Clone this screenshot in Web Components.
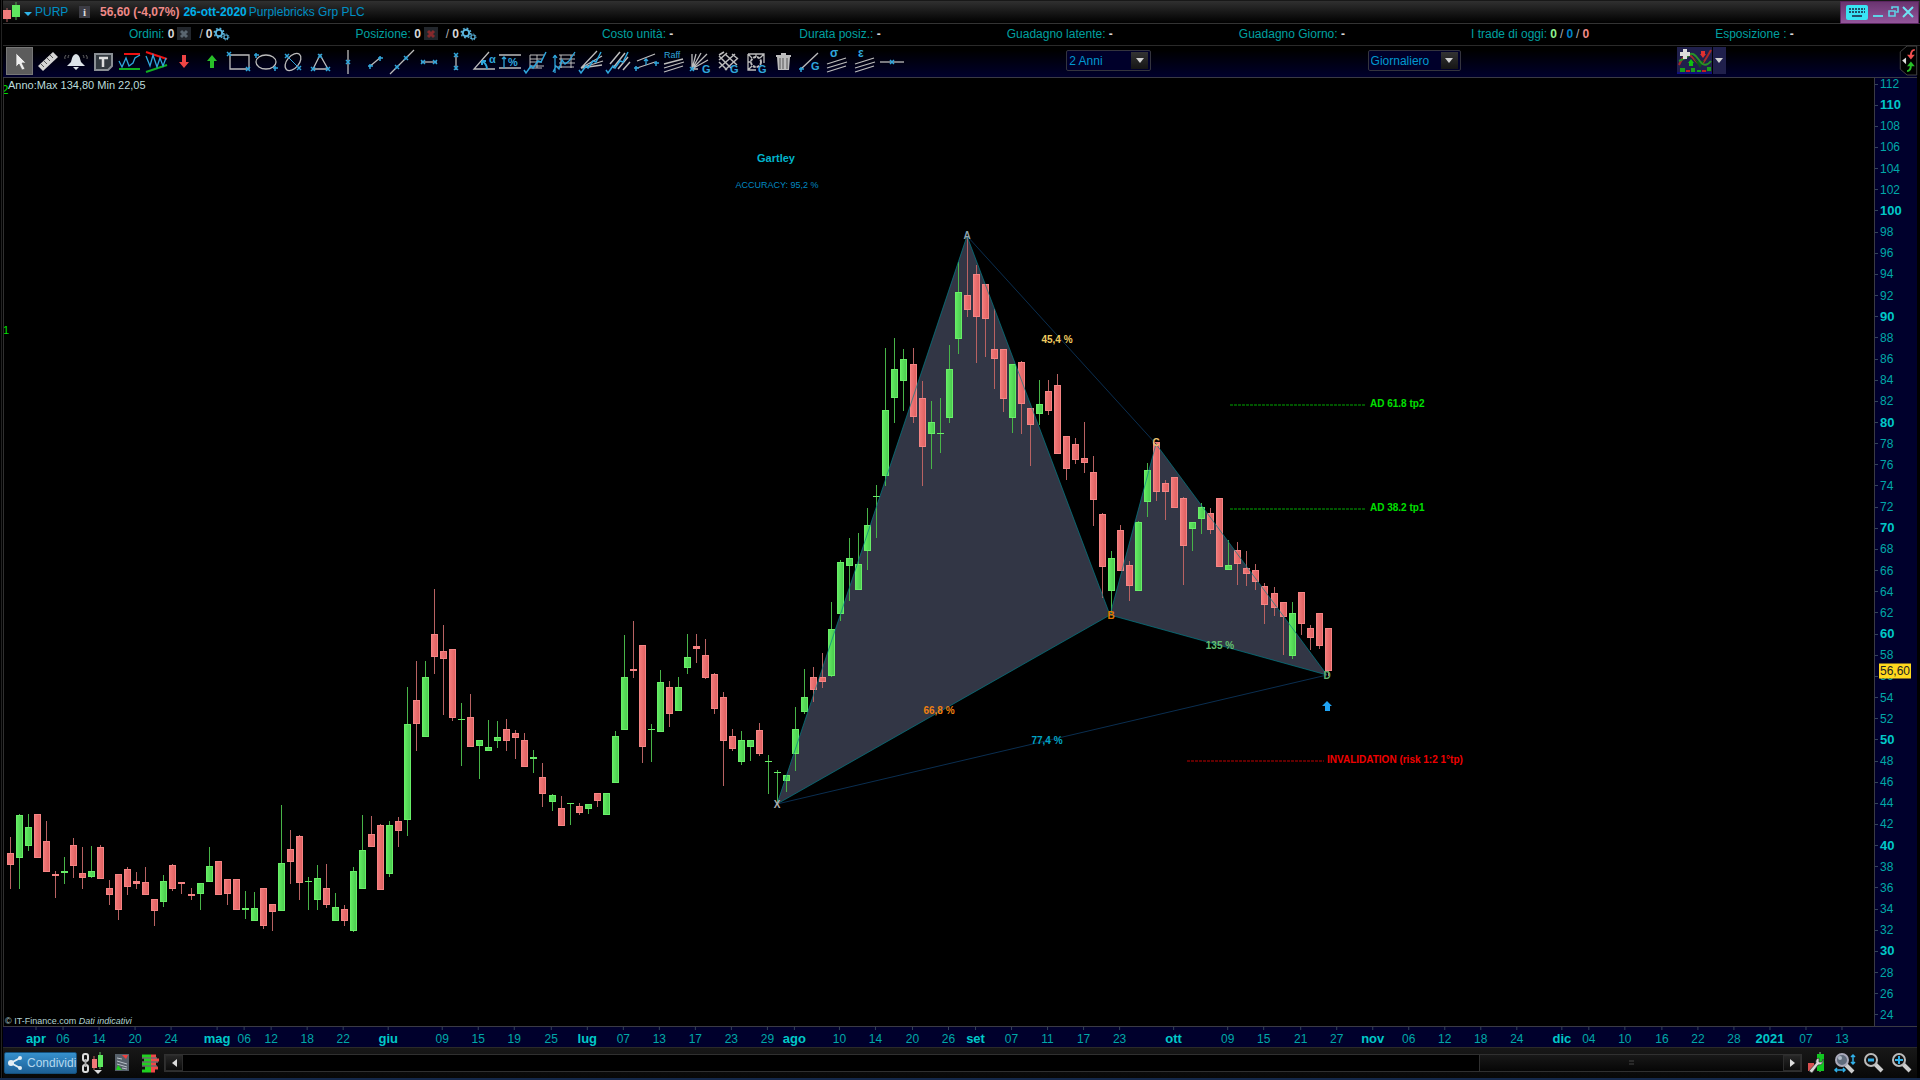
<!DOCTYPE html>
<html lang="it">
<head>
<meta charset="utf-8">
<title>PURP - Purplebricks Grp PLC</title>
<style>
  html, body { height: 100%; margin: 0; background: #000; }
  body { font: 12px/14px "Liberation Sans", Arial, sans-serif; color: #00a0a0; overflow: hidden; }
</style>
</head>
<body>
<pt-window>
  <pt-titlebar symbol="PURP" price="56,60 (-4,07%)" date="26-ott-2020">Purplebricks Grp PLC</pt-titlebar>
  <pt-account></pt-account>
  <pt-toolbar></pt-toolbar>
  <pt-chart></pt-chart>
  <pt-timeaxis></pt-timeaxis>
  <pt-bottombar></pt-bottombar>
</pt-window>

<script>
// Shared base: render() returns the shadow markup
class PtElement extends HTMLElement {
  connectedCallback() {
    if (this.shadowRoot) return;
    this.attachShadow({ mode: "open" });
    this.shadowRoot.innerHTML = this.render();
  }
}

const RESET = `
  * { box-sizing: border-box; }
  button { all: unset; box-sizing: border-box; display: grid; place-items: center; cursor: default; }
  svg { display: block; overflow: visible; }
`;

class PtWindow extends PtElement {
  render() {
    return `
      <style>
        :host {
          display: grid;
          box-sizing: border-box;
          grid-template-rows: 24px 22px 32px minmax(0, 1fr) 20px 31px;
          height: 100vh;
          padding-left: 3px;
          background: linear-gradient(90deg, #000 1px, #222 1px, #222 2px, #000 2px);
          border-bottom: 2px solid #14284a;
        }
      </style>
      <slot></slot>
    `;
  }
}
customElements.define("pt-window", PtWindow);

class PtTitlebar extends PtElement {
  render() {
    return `
      <style>
        ${RESET}
        :host {
          display: flex;
          align-items: center;
          box-sizing: border-box;
          background: linear-gradient(#303030, #000);
          border-top: 1px solid #181818;
          border-bottom: 1px solid #333;
          color: #008fc4;
        }
        .symbol { display: flex; align-items: center; gap: 8px; width: 76px; color: #008fc4; }
        .info { width: 11px; height: 12px; margin-right: 10px; background: #3c3c44; color: #ddd; font: bold 11px/12px "Liberation Serif", serif; }
        .price { color: #f08a88; font-weight: bold; margin-right: 4px; }
        .date { color: #00b0ea; font-weight: bold; margin-right: 2px; }
        .win {
          display: flex; align-items: center; gap: 5px; height: 23px; margin-left: auto; padding: 0 5px; margin-right: 1px;
          background: linear-gradient(#6a3470, #93569a); border: 1px solid #5a2560;
        }
      </style>
      <button class="symbol">
        <svg width="24" height="20" viewBox="0 0 24 20" aria-hidden="true">
          <path d="M4 6v14" stroke="#b06060"/><rect x="0" y="8" width="8" height="9" fill="#f07c7c"/>
          <path d="M13 0v18" stroke="#50b050"/><rect x="9" y="3" width="8" height="12" fill="#5fe85f"/>
          <path d="M21 10h8l-4 4z" fill="#2fb4e8"/>
        </svg>
        ${this.getAttribute("symbol")}
      </button>
      <button class="info" aria-label="Info">i</button>
      <span class="price">${this.getAttribute("price")}</span>
      <span class="date">${this.getAttribute("date")}</span>
      <slot></slot>
      <div class="win">
        <button aria-label="Tastiera"><svg width="22" height="16" viewBox="0 0 22 16">
          <rect y="1" width="22" height="15" rx="2" fill="#38e4f4"/>
          <path d="M3 5h16M3 8h16" stroke="#20506a" stroke-width="2" stroke-dasharray="2 1"/>
          <path d="M6 12h10" stroke="#20506a" stroke-width="2"/></svg></button>
        <button aria-label="Riduci"><svg width="10" height="14"><path d="M0 11h10" stroke="#5fd4e8" stroke-width="2"/></svg></button>
        <button aria-label="Ripristina"><svg width="10" height="12" fill="none" stroke="#5fd4e8"><path d="M4 3V1h6v5H8M1 5h6v5H1z" stroke-width="1.6"/></svg></button>
        <button aria-label="Chiudi"><svg width="10" height="10"><path d="M0 0l10 10M10 0L0 10" stroke="#6fe4f4" stroke-width="2"/></svg></button>
      </div>
    `;
  }
}
customElements.define("pt-titlebar", PtTitlebar);

const GEARS = `
  <svg width="16" height="14" viewBox="0 0 16 14" fill="none" stroke="#5ab4dc">
    <circle cx="6" cy="6" r="3.2" stroke-width="2"/>
    <circle cx="6" cy="6" r="4.8" stroke-width="1.4" stroke-dasharray="1.8 1.97"/>
    <circle cx="13" cy="10" r="2" stroke-width="1.2"/>
    <circle cx="13" cy="10" r="3" stroke-width="1" stroke-dasharray="1.2 1.15"/>
  </svg>`;

class PtAccount extends PtElement {
  orders(label, color) {
    return `
      <div>${label}:&nbsp;<b>0</b>
        <button class="cancel" aria-label="Annulla ${label}"><svg width="8" height="8"><path d="M1 1l6 6M7 1L1 7" stroke="${color}" stroke-width="3"/></svg></button>
        <i>/</i><b>0</b><button class="gears" aria-label="Opzioni ${label}">${GEARS}</button>
      </div>`;
  }
  render() {
    const plain = label => `<div>${label}&nbsp;<b>-</b></div>`;
    return `
      <style>
        ${RESET}
        :host {
          display: flex; align-items: center; justify-content: space-evenly; box-sizing: border-box;
          padding-bottom: 2px; border-bottom: 1px solid #2a2a2a; background: #000;
        }
        div { display: flex; align-items: center; }
        b { color: #d8d8d8; }
        i { color: #b0b0b0; font-style: normal; margin: 0 3px; }
        .cancel { width: 14px; height: 13px; margin: 0 5px 0 3px; background: #22262c; }
        .gears { margin-left: 1px; }
      </style>
      ${this.orders("Ordini", "#5a6670")}
      ${this.orders("Posizione", "#84292c")}
      ${plain("Costo unità:")}
      ${plain("Durata posiz.:")}
      ${plain("Guadagno latente:")}
      ${plain("Guadagno Giorno:")}
      <div>I trade di oggi:&nbsp;<b style="color:#8ff08f">0</b><i>/</i><b style="color:#0082c8">0</b><i>/</i><b style="color:#f08a88">0</b></div>
      ${plain("Esposizione :")}
    `;
  }
}
customElements.define("pt-account", PtAccount);

// Toolbar icons, all on a 28 x 28 grid
const W = "#bcbcbc";
const B = "#2fa6dc";
const cross = (x, y) => `<path d="M${x - 2} ${y - 2}l4 4m0-4l-4 4" stroke="${B}" stroke-width="1.5"/>`;
const plus = (x, y) => `<path d="M${x - 2} ${y}h5M${x} ${y - 2}v5" stroke="${B}" stroke-width="1.5"/>`;
const line = (d, color = W, w = 1.3) => `<path d="${d}" stroke="${color}" stroke-width="${w}" fill="none"/>`;
const glyph = (x, y, t, size = 11, weight = "bold") =>
  `<text x="${x}" y="${y}" fill="${B}" font-size="${size}" font-weight="${weight}">${t}</text>`;
const TREND = line("M0 22l2 3 5-7 2 2 5-7 3 1 5-10", B, 1.5);

const TOOLS = [
  ["Cursore", `<path d="M9 5v14l3-3 3 6 3-1-3-6h4z" fill="#eee" stroke="#555" stroke-width=".7"/>`],
  ["Misura", `<path d="M4 18L19 4l5 5L9 23z" fill="#d4d4d4"/>${line("M7 16l3 3M10 13l3 3M13 10l3 3M16 7l3 3", "#555", 1)}`],
  ["Allarme", `<path d="M14 6c-4 1-4 5-5 8l-4 4h18l-4-4c-1-3-1-7-5-8zM11 19h6l-3 3z" fill="#dde4e8"/>${line("M4 7q-2 2-1 4M7 7q-1 1-1 3M24 7q2 2 1 4M21 7q1 1 1 3", "#666", 1)}`],
  ["Testo", `<path d="M6 6h17v12l-4 4H6z" fill="#333a40" stroke="#8a8f94" stroke-width="2"/>${line("M10 10h9M14 10v9", "#ddd", 2.5)}`],
  ["Supporti", `${line("M8 6h16", "#f01010", 2)}${line("M3 21h21", "#10b020", 2)}${line("M3 13l3 6 4-9 3 8 4-3 2-5 5-3", B, 1.3)}`],
  ["Triangoli", `${line("M3 4l21 7", "#f01010", 2)}${line("M3 24l21-7", "#10b020", 2)}${line("M3 8l4 10 3-11 4 12 3-9 3 8 3-8", B, 1.3)}`],
  ["Freccia giù", `<path d="M12 7h4v7h3l-5 6-5-6h3z" fill="#ee4444"/>`],
  ["Freccia su", `<path d="M12 20h4v-7h3l-5-6-5 6h3z" fill="#28c028"/>`],
  ["Rettangolo", `${line("M5 7h19v14H5z")}${cross(4, 6)}${cross(23, 21)}`],
  ["Ellisse", `<ellipse cx="14" cy="14" rx="10" ry="7" fill="none" stroke="${W}" stroke-width="1.3"/>${plus(4, 7)}${plus(23, 20)}`],
  ["Ellisse obliqua", `<ellipse cx="14" cy="14" rx="10" ry="6" transform="rotate(-50 14 14)" fill="none" stroke="${W}" stroke-width="1.3"/>${line("M8 8l12 12", B, 1)}${cross(8, 8)}${cross(20, 20)}`],
  ["Triangolo", `${line("M14 7L7 21h15z")}${cross(14, 8)}${cross(7, 21)}${cross(22, 21)}`],
  ["Verticale", `${line("M14 2v24")}${cross(14, 14)}`],
  ["Segmento", `${line("M8 19L20 9")}${plus(9, 18)}${plus(19, 10)}`],
  ["Retta", `${line("M2 26L26 2")}${cross(9, 19)}${cross(18, 10)}`],
  ["Segmento orizzontale", `${line("M6 14h16")}${cross(8, 14)}${cross(20, 14)}`],
  ["Segmento verticale", `${line("M14 6v16")}${cross(14, 7)}${cross(14, 20)}`],
  ["Angolo", `${line("M19 4L4 21h21")}${line("M12 13q5 3 5 8M12 13l4 0M12 13v4", B, 2)}${glyph(19, 15, "α", 11)}`],
  ["Percentuale", `${line("M2 7h22M2 20h22")}${line("M7 20V9M5 11l2-2 2 2", B)}${glyph(11, 18, "%", 11)}`],
  ["Fibonacci", `${line("M6 7h14M6 11h12M6 14h12M6 18h14M6 20h12M6 7v13M13 7v13", W, 1)}${TREND}`],
  ["Estensioni", `${line("M8 7h16M8 11h16M8 15h16M6 19h17M10 7v13M20 7v13", W, 1)}${line("M2 24l3-6 3 3 3-9 3 4 4-3 6-9M4 7v18M4 7l-2 3M4 7l2 3", B)}`],
  ["Ventaglio", `${line("M2 20L18 3M2 20L23 8M2 20L24 13M2 20L23 17")}${TREND}`],
  ["Forchetta", `${line("M4 16L14 4M7 20L19 5M12 21L22 9M17 22l7-8", W, 1.5)}${TREND}`],
  ["Canale", `${line("M4 13L22 6M4 20L22 14")}${plus(3, 20)}${plus(23, 15)}${line("M13 17V11M11 13l2-2 2 2", B)}`],
  ["Canale Raff", `${line("M4 16l19-5M4 20l20-6M4 24l19-6")}${glyph(4, 10, "Raff", 9, "normal")}`],
  ["Gann ventaglio", `${line("M5 21V6M5 21L9 6M5 21L14 5M5 21L20 6M5 21L21 12M5 21h6")}${cross(5, 21)}${glyph(15, 25, "G")}`],
  ["Gann griglia", `${line("M4 8l12 12M4 14l8 8M10 6l12 11M17 6l6 5M4 20L20 6M4 12l8-7M10 22L23 10M4 7l5-3", W, 1.5)}${glyph(15, 25, "G")}`],
  ["Gann quadrato", `${line("M6 6h16v9M14 22H6V6M6 6l4 4M22 6l-4 4M6 22l4-4M14 6v3M6 14h3")}<circle cx="14" cy="14" r="5" fill="none" stroke="${W}" stroke-width="2" stroke-dasharray="3 1"/>${glyph(16, 25, "G")}`],
  ["Elimina", `<path d="M8 9h13l-1 13H9zM7 7h15v2H7zM12 5h5v2h-5z" fill="#bdbdbd"/>${line("M11 10v11M14 10v11M18 10v11", "#555", 1)}`],
  ["Gann linea", `${line("M5 21L22 5")}${plus(5, 21)}${glyph(15, 22, "G")}`],
  ["Deviazione", `${line("M4 16l19-6M4 20l20-6M4 24l19-6")}${glyph(7, 9, "σ", 12)}`],
  ["Errore standard", `${line("M4 16l19-6M4 20l20-6M4 24l19-6")}${glyph(7, 9, "ε", 12)}`],
  ["Orizzontale", `${line("M2 14h24")}${cross(14, 14)}`],
];

class PtTool extends PtElement {
  render() {
    return `
      <style>
        ${RESET}
        :host { display: grid; justify-content: center; }
        button { width: 27px; height: 28px; border: 1px solid transparent; }
        :host([active]) button { background: #5c5c5c; border-color: #777; }
      </style>
      <button aria-label="${this.getAttribute("label")}"><slot></slot></button>
    `;
  }
}
customElements.define("pt-tool", PtTool);

class PtSelect extends PtElement {
  render() {
    return `
      <style>
        :host { display: grid; grid-template-columns: minmax(0, 1fr) 17px; align-items: center; box-sizing: border-box;
          height: 21px; padding-right: 2px; border: 1px solid #34343e; border-radius: 2px; background: #00002a; }
        select { appearance: none; grid-area: 1 / 1 / 2 / 3; border: 0; margin: 0; padding: 0 2px; height: 19px; background: none; color: #0098d0; font: inherit; }
        span { grid-area: 1 / 2; display: grid; place-items: center; height: 17px; background: linear-gradient(#333, #151515); pointer-events: none; }
      </style>
      <select aria-label="${this.getAttribute("label")}"><option>${this.getAttribute("value")}</option></select>
      <span><svg width="8" height="5"><path d="M0 0h8L4 5z" fill="#d0d0d0"/></svg></span>
    `;
  }
}
customElements.define("pt-select", PtSelect);

class PtToolbar extends PtElement {
  render() {
    const tools = TOOLS.map(([label, art], i) =>
      `<pt-tool label="${label}"${i ? "" : " active"}><svg width="28" height="28" viewBox="0 0 28 28">${art}</svg></pt-tool>`).join("");
    return `
      <style>
        ${RESET}
        :host {
          display: flex; align-items: center; box-sizing: border-box; margin-right: 3px; padding: 0 0 2px 3px;
          background: linear-gradient(#000 15%, #00002c); border-bottom: 1px solid #3a3a44;
        }
        .tools { display: grid; grid-template-columns: repeat(33, 1fr); flex: 0 0 898px; }
        .gap { flex: 20; }
        .gap.first { flex: 15; }
        .gap.last { flex: 16; }
        .range { width: 85px; }
        .period { width: 93px; }
        .indicator { display: flex; height: 27px; background: #20204c; }
        .indicator button + button { width: 14px; border-left: 1px solid #000; }
        .tab { width: 18px; height: 29px; }
      </style>
      <div class="tools">${tools}</div>
      <span class="gap first"></span>
      <pt-select class="range" label="Intervallo" value="2 Anni"></pt-select>
      <span class="gap"></span>
      <pt-select class="period" label="Periodo" value="Giornaliero"></pt-select>
      <span class="gap"></span>
      <div class="indicator">
        <button aria-label="Aggiungi indicatore"><svg width="35" height="27" viewBox="0 0 35 27" fill="none">
          <path d="M2 18q7-16 14-7t10 5 8-13" stroke="#a82828" stroke-width="2"/>
          <path d="M16 10l4 4h7l-4 7z" fill="#085818"/>
          <path d="M2 14q6-2 10-6t10 5 12 1" stroke="#289028" stroke-width="2"/>
          <path d="M8 2v10M3 7h10" stroke="#ddd" stroke-width="4"/>
          <path d="M24 4h4v3h1l-3 4-3-4h1z" fill="#e03030"/><path d="M12 19h4v-3h1l-3-4-3 4h1z" fill="#10c010"/>
          <path d="M3 23h5M14 23h4M30 22h4" stroke="#18a018" stroke-width="4"/><path d="M9 24h4M25 24h4" stroke="#c02020" stroke-width="2"/><path d="M20 24h4" stroke="#18a018" stroke-width="2"/>
          <path d="M0 26h35" stroke="#0000b0"/>
        </svg></button>
        <button aria-label="Altri indicatori"><svg width="8" height="5"><path d="M0 0h8L4 5z" fill="#d0d0d0"/></svg></button>
      </div>
      <span class="gap last"></span>
      <button class="tab" aria-label="Pannello ordini"><svg width="18" height="29" viewBox="0 0 18 30">
        <path d="M18 0H8L1 6v18l7 6h10z" fill="#000" stroke="#444"/>
        <path d="M7 12v7l-4-4z" fill="#ddd"/>
        <path d="M16 4q-4 0-4 6" stroke="#f05050" stroke-width="2" fill="none"/><path d="M8 9h8l-4 5z" fill="#f05050"/>
        <path d="M8 26q4 0 4-6" stroke="#28c028" stroke-width="2" fill="none"/><path d="M8 21h8l-4-5z" fill="#28c028"/>
      </svg></button>
    `;
  }
}
customElements.define("pt-toolbar", PtToolbar);

// Plot space: origin and size of the drawing area, candle pitch
const PLOT = { x: 4, y: 78, w: 1870, h: 948 };
const slotX = i => Math.round(10 + i * 9.025);
const px = x => ((x - PLOT.x) / PLOT.w * 100).toFixed(3) + "%";
const py = y => ((y - PLOT.y) / PLOT.h * 100).toFixed(3) + "%";

// direction, high, body top, body bottom, low
const CANDLES = `
r 837 853 865 889|g 814 815 858 889|g 814 827 846 851|r 814 814 858 858|r 821 841 872 872|r 871 874 876 898
g 857 871 873 884|r 838 845 866 878|r 847 873 878 889|g 846 871 877 878|r 845 847 879 879|r 880 888 895 905
r 874 874 910 920|r 867 869 887 895|r 872 881 884 889|r 867 882 895 895|r 899 899 911 926|g 875 881 902 907
r 864 865 889 891|r 882 882 884 894|r 888 894 896 900|g 883 883 894 910|g 847 866 882 882|r 861 861 895 895
r 879 879 894 905|r 879 879 910 910|g 891 908 910 919|g 892 908 921 921|r 888 888 926 929|r 904 904 912 931
g 805 863 911 911|r 830 849 862 884|r 835 836 883 900|g 877 881 882 910|g 865 878 900 910|r 864 888 905 908
g 893 907 921 921|r 905 909 921 926|g 867 871 931 932|g 815 850 889 889|r 816 834 847 847|r 824 825 890 890
g 821 825 874 877|r 817 821 831 847|g 687 724 820 836|r 661 700 724 751|g 661 677 737 737|r 589 634 657 674
r 625 651 659 715|r 649 649 718 721|g 703 719 720 766|r 694 717 747 747|g 740 740 746 779|g 720 747 751 751
g 721 737 741 748|r 719 729 741 751|r 730 733 738 759|r 733 740 767 767|g 750 757 759 773|r 763 777 794 807
g 794 795 802 811|r 796 808 826 826|g 803 803 804 825|r 803 806 813 815|g 804 804 809 814|r 793 793 801 807
g 793 793 815 815|g 731 736 783 783|g 635 677 730 730|r 621 669 671 678|r 645 645 747 763|g 724 729 730 762
g 670 682 732 732|r 681 687 714 727|g 677 687 711 711|g 634 657 668 674|r 634 646 649 663|r 639 655 678 679
r 673 674 709 714|r 692 697 741 786|r 729 736 749 751|g 731 740 762 765|g 740 740 747 761|r 723 730 754 756
g 755 761 762 794|g 770 772 773 802|g 775 775 781 792|g 707 729 754 771|g 669 697 712 714|r 667 677 690 702
r 653 677 682 688|g 602 629 676 677|g 560 562 614 621|g 538 558 566 601|g 533 564 590 590|g 508 525 551 570
g 485 496 497 538|g 348 410 476 486|g 338 369 398 423|g 349 359 381 411|r 348 364 417 423|r 381 398 447 486
g 401 422 434 469|g 398 433 434 453|g 345 369 418 423|g 262 292 339 354|r 236 295 310 317|r 265 274 317 363
r 284 284 319 357|r 309 349 359 389|r 349 349 399 412|g 364 364 418 433|r 361 362 404 434|r 408 408 425 466
g 380 404 414 425|r 380 391 411 415|r 374 385 454 454|r 436 436 469 480|r 438 444 460 464|r 422 458 463 473
r 456 472 500 526|r 513 514 567 598|g 551 558 591 613|r 525 530 571 571|r 561 565 586 601|g 521 522 591 591
g 463 470 502 517|r 442 442 492 501|r 480 483 492 520|r 477 477 508 508|r 497 498 546 585|g 522 522 529 551
g 503 507 519 534|r 508 513 530 534|r 498 498 567 567|g 540 565 570 570|r 542 550 564 585|r 551 568 574 586
r 564 570 582 590|r 583 586 605 624|r 587 593 608 616|r 602 602 617 655|g 602 613 656 659|r 592 592 624 635
r 625 628 638 650|r 613 613 646 649|r 628 628 671 676`.trim().split(/[|\n]/).map(row => row.split(" "));

const LABELS = [
  [776, 159, "Gartley", "#00b4cc", "middle", 11, "bold"],
  [777, 185, "ACCURACY: 95,2 %", "#0088c0", "middle", 9, "normal"],
  [967, 236, "A", "#8ea4ae", "middle", 10, "bold"],
  [777, 805, "X", "#b0b0b0", "middle", 10, "bold"],
  [1111, 616, "B", "#e07800", "middle", 10, "bold"],
  [1156, 443, "C", "#e8c070", "middle", 10, "bold"],
  [1327, 676, "D", "#60b070", "middle", 10, "bold"],
  [1057, 340, "45,4 %", "#f0cc60", "middle", 10, "bold"],
  [939, 711, "66,8 %", "#f08010", "middle", 10, "bold"],
  [1047, 741, "77,4 %", "#00a4c4", "middle", 10, "bold"],
  [1220, 646, "135 %", "#60c070", "middle", 10, "bold"],
  [1370, 404, "AD 61.8 tp2", "#00e000", "start", 10, "bold"],
  [1370, 508, "AD 38.2 tp1", "#00e000", "start", 10, "bold"],
  [1327, 760, "INVALIDATION (risk 1:2 1°tp)", "#f00000", "start", 10, "bold"],
];

class PtPriceAxis extends PtElement {
  render() {
    let rows = "";
    for (let p = 112; p >= 24; p -= 2) rows += p % 10 ? `<span>${p}</span>` : `<b>${p}</b>`;
    return `
      <style>
        :host {
          position: relative; display: flex; flex-direction: column; justify-content: space-between; box-sizing: border-box;
          padding-bottom: 5px; border-left: 1px solid #3a3a44; background: #00002c; line-height: 12px;
        }
        span, b { display: flex; align-items: center; gap: 2px; color: #00a8a8; }
        b { color: #00c8c8; font-size: 13px; }
        span::before, b::before { content: ""; width: 3px; height: 1px; background: #33445a; }
        mark {
          position: absolute; top: ${py(671)}; left: 4px; transform: translateY(-50%);
          padding: 0 1px; line-height: 15px; background: #ffd81e; color: #222;
        }
      </style>
      ${rows}
      <mark>56,60</mark>
    `;
  }
}
customElements.define("pt-priceaxis", PtPriceAxis);

class PtChart extends PtElement {
  render() {
    const candles = CANDLES.map(([dir, hi, top, bot, lo], i) => {
      const x = slotX(i);
      return `<rect class="w${dir}" x="${x}" y="${hi}" width="1" height="${Math.max(1, lo - hi)}"/>` +
        `<rect class="${dir}" x="${x - 3}" y="${top}" width="7" height="${bot - top}"/>` +
        (bot - top > 3 ? `<rect class="e${dir}" x="${x - 2}" y="${+top + 1}" width="5" height="${bot - top - 2}"/>` : "");
    }).join("");
    const labels = LABELS.map(([x, y, t, color, anchor, size, weight]) =>
      `<text x="${px(x)}" y="${py(y)}" dy="3" fill="${color}" text-anchor="${anchor}" font-size="${size}" font-weight="${weight}">${t}</text>`).join("");
    return `
      <style>
        :host { display: grid; grid-template-columns: minmax(0, 1fr) 43px; min-height: 0; margin-right: 3px; border-bottom: 1px solid #3a3a44; }
        .plot { position: relative; min-height: 0; border-left: 1px solid #303030; background: #000; overflow: hidden; }
        svg { position: absolute; inset: 0; width: 100%; height: 100%; }
        .r { fill: #f58484; } .er { fill: url(#red); } .wr { fill: #b86262; }
        .g { fill: #68ee68; } .eg { fill: url(#green); } .wg { fill: #48b448; }
        .range { position: absolute; left: 4px; top: 0; color: #bcdcdc; font-size: 11px; }
        .source { position: absolute; left: 1px; bottom: 0; color: #b4d4d4; font-size: 9px; line-height: 10px; }
      </style>
      <div class="plot">
        <svg viewBox="${PLOT.x} ${PLOT.y} ${PLOT.w} ${PLOT.h}" preserveAspectRatio="none">
          <defs>
            <linearGradient id="red"><stop stop-color="#f07878"/><stop offset="1" stop-color="#e06262"/></linearGradient>
            <linearGradient id="green"><stop stop-color="#60e860"/><stop offset="1" stop-color="#4ccc50"/></linearGradient>
          </defs>
          <path d="M777 804L967 236L1110 615zM1110 615L1156 444L1327 675z" fill="#323645"/>
          ${candles}
          <path d="M777 804L967 236L1110 615zM1110 615L1156 444L1327 675z" fill="none" stroke="#00808a" stroke-opacity=".7"/>
          <path d="M967 236L1156 444M777 804L1327 675" stroke="#0a2e50"/>
          <path d="M1230 405h136M1230 509h136" stroke="#00a800" stroke-dasharray="3 1"/>
          <path d="M1187 761h137" stroke="#c00000" stroke-dasharray="3 1"/>
          <path d="M1327 701l5 5h-2v5h-5v-5h-3z" fill="#20a4f4"/>
        </svg>
        <svg>
          ${labels}
          <text x="1" y="${py(94)}" fill="#00e000" font-size="12" text-anchor="middle">2</text>
          <text x="-1" y="${py(334)}" fill="#00e000" font-size="11">1</text>
        </svg>
        <div class="range">Anno:Max 134,80 Min 22,05</div>
        <div class="source">© IT-Finance.com <em>Dati indicativi</em></div>
      </div>
      <pt-priceaxis></pt-priceaxis>
    `;
  }
}
customElements.define("pt-chart", PtChart);

// candle index, label; names of months are bold
const DATES = [
  [3, "apr"], [6, "06"], [10, "14"], [14, "20"], [18, "24"], [23, "mag"], [26, "06"], [29, "12"], [33, "18"], [37, "22"],
  [42, "giu"], [48, "09"], [52, "15"], [56, "19"], [60, "25"], [64, "lug"], [68, "07"], [72, "13"], [76, "17"], [80, "23"],
  [84, "29"], [87, "ago"], [92, "10"], [96, "14"], [100, "20"], [104, "26"], [107, "set"], [111, "07"], [115, "11"],
  [119, "17"], [123, "23"], [129, "ott"], [135, "09"], [139, "15"], [143, "21"], [147, "27"], [151, "nov"], [155, "06"],
  [159, "12"], [163, "18"], [167, "24"], [172, "dic"], [175, "04"], [179, "10"], [183, "16"], [187, "22"], [191, "28"],
  [195, "2021"], [199, "07"], [203, "13"],
];

class PtTimeAxis extends PtElement {
  render() {
    const ticks = DATES.map(([i, t]) => {
      const x = px(slotX(i));
      return `<line x1="${x}" x2="${x}" y2="3" stroke="#33445a"/>` +
        `<text x="${x}" y="16"${t.length > 2 ? ' class="month"' : ""}>${t}</text>`;
    }).join("");
    return `
      <style>
        :host { display: block; margin-right: 3px; padding-right: 43px; background: #00002c; }
        svg { display: block; width: 100%; height: 20px; text-anchor: middle; fill: #00a8a8; }
        .month { fill: #00c8c8; font-size: 13px; font-weight: bold; }
      </style>
      <svg>${ticks}</svg>
    `;
  }
}
customElements.define("pt-timeaxis", PtTimeAxis);

class PtBottombar extends PtElement {
  render() {
    return `
      <style>
        ${RESET}
        :host {
          display: flex; align-items: center; box-sizing: border-box; margin-right: 3px; padding: 0 4px 0 1px;
          background: linear-gradient(#181818, #080808); border-top: 1px solid #2a2a2a;
        }
        .share {
          display: flex; align-items: center; gap: 5px; height: 22px; width: 73px; padding-left: 3px; margin-right: 4px;
          background: linear-gradient(#3690cc, #1c5f96); border: 1px solid #14507c; border-radius: 2px; color: #b4d8ee;
        }
        .left { display: flex; gap: 11px; margin-right: 5px; }
        .scroll { display: flex; flex: 1; height: 18px; border: 1px solid #303030; background: #000; }
        .scroll button { width: 18px; background: linear-gradient(#262626, #0c0c0c); border: 1px solid #2c2c2c; }
        .track { display: flex; flex: 1; justify-content: flex-end; }
        .thumb { display: grid; place-items: center; width: 19%; background: linear-gradient(#181818, #060606); border-left: 1px solid #303030; }
        .right { display: flex; gap: 4px; margin-left: 5px; }
      </style>
      <button class="share"><svg width="14" height="16" viewBox="0 0 14 16">
        <path d="M12 3L3 8l9 5" stroke="#e4eef4" stroke-width="2" fill="none"/>
        <circle cx="3" cy="8" r="3" fill="#e4eef4"/><circle cx="12" cy="3" r="2" fill="#e4eef4"/><circle cx="12" cy="13" r="2" fill="#e4eef4"/>
      </svg>Condividi</button>
      <div class="left">
        <button aria-label="Collega"><svg width="22" height="22" viewBox="0 0 22 22" fill="none">
          <rect x="2" y="2" width="5" height="7" rx="2" stroke="#ddd" stroke-width="2"/><rect x="2" y="13" width="5" height="7" rx="2" stroke="#ddd" stroke-width="2"/><path d="M4.500 7v8" stroke="#aaa" stroke-width="2"/>
          <path d="M13 4v14" stroke="#c66"/><rect x="11" y="7" width="5" height="9" fill="#f07878"/><path d="M19 0v17" stroke="#6c6"/><rect x="17" y="3" width="5" height="12" fill="#5fe85f"/><path d="M13 18h8l-4 4z" fill="#ddd"/>
        </svg></button>
        <button aria-label="Ordini"><svg width="16" height="20" viewBox="0 0 16 20">
          <path d="M1 1h14v17H1z" fill="#56606a"/><path d="M3 5l5 1M3 8l10 3M3 11l10 3M8 15l5 1" stroke="#b8c0c8"/><path d="M8 2h6l-2 4z" fill="#f04040"/><path d="M2 17h6l-4-5z" fill="#20d020"/>
        </svg></button>
        <button aria-label="Book"><svg width="18" height="20" viewBox="0 0 18 20">
          <path d="M1 3h9M3 7h7M1 11h9M4 15h6M1 18h9" stroke="#20d020" stroke-width="3"/><path d="M10 3h5M10 7h8M10 11h5M10 15h7M10 18h4" stroke="#f04848" stroke-width="3"/>
          <path d="M1 5h15M1 9h16M1 13h15" stroke="#999"/>
        </svg></button>
      </div>
      <div class="scroll">
        <button aria-label="Indietro"><svg width="5" height="8"><path d="M5 0v8L0 4z" fill="#ddd"/></svg></button>
        <div class="track"><div class="thumb"><svg width="5" height="4"><path d="M0 0h5M0 3h5" stroke="#444"/></svg></div></div>
        <button aria-label="Avanti"><svg width="5" height="8"><path d="M0 0v8l5-4z" fill="#ddd"/></svg></button>
      </div>
      <div class="right">
        <button aria-label="Impostazioni grafico"><svg width="20" height="22" viewBox="0 0 20 22">
          <path d="M13 0v20" stroke="#9c9"/><rect x="10" y="2" width="7" height="17" fill="#10c820"/><rect x="1" y="11" width="6" height="8" fill="#d85050"/>
          <path d="M2 19L9 11q-1-4 3-5v4h3l1-3q1 6-5 6L5 21z" fill="#d8d8d8" stroke="#333" stroke-width=".7"/>
        </svg></button>
        <button aria-label="Adatta scala"><svg width="26" height="22" viewBox="0 0 26 22" fill="none">
          <path d="M15 13l7 7" stroke="#ccc" stroke-width="4"/><circle cx="11" cy="8" r="6" fill="#606c7c" stroke="#aab" stroke-width="2"/><circle cx="9" cy="6" r="2" fill="#b0bcc8"/>
          <path d="M22 3v9M20 5l2-2 2 2M20 10l2 2 2-2M4 18h10M6 16l-2 2 2 2M12 16l2 2-2 2" stroke="#30b0e8" stroke-width="1.5"/>
        </svg></button>
        <button aria-label="Riduci zoom"><svg width="24" height="22" viewBox="0 0 24 22" fill="none">
          <path d="M14 12l7 7" stroke="#ccc" stroke-width="4"/><circle cx="10" cy="8" r="6" stroke="#bbb" stroke-width="2"/><path d="M7 8h6" stroke="#30b0e8" stroke-width="3"/>
        </svg></button>
        <button aria-label="Aumenta zoom"><svg width="24" height="22" viewBox="0 0 24 22" fill="none">
          <path d="M14 12l7 7" stroke="#ccc" stroke-width="4"/><circle cx="10" cy="8" r="6" stroke="#bbb" stroke-width="2"/><path d="M6 8h8M10 4v8" stroke="#30b0e8" stroke-width="2"/>
        </svg></button>
      </div>
    `;
  }
}
customElements.define("pt-bottombar", PtBottombar);
</script>
</body>
</html>
